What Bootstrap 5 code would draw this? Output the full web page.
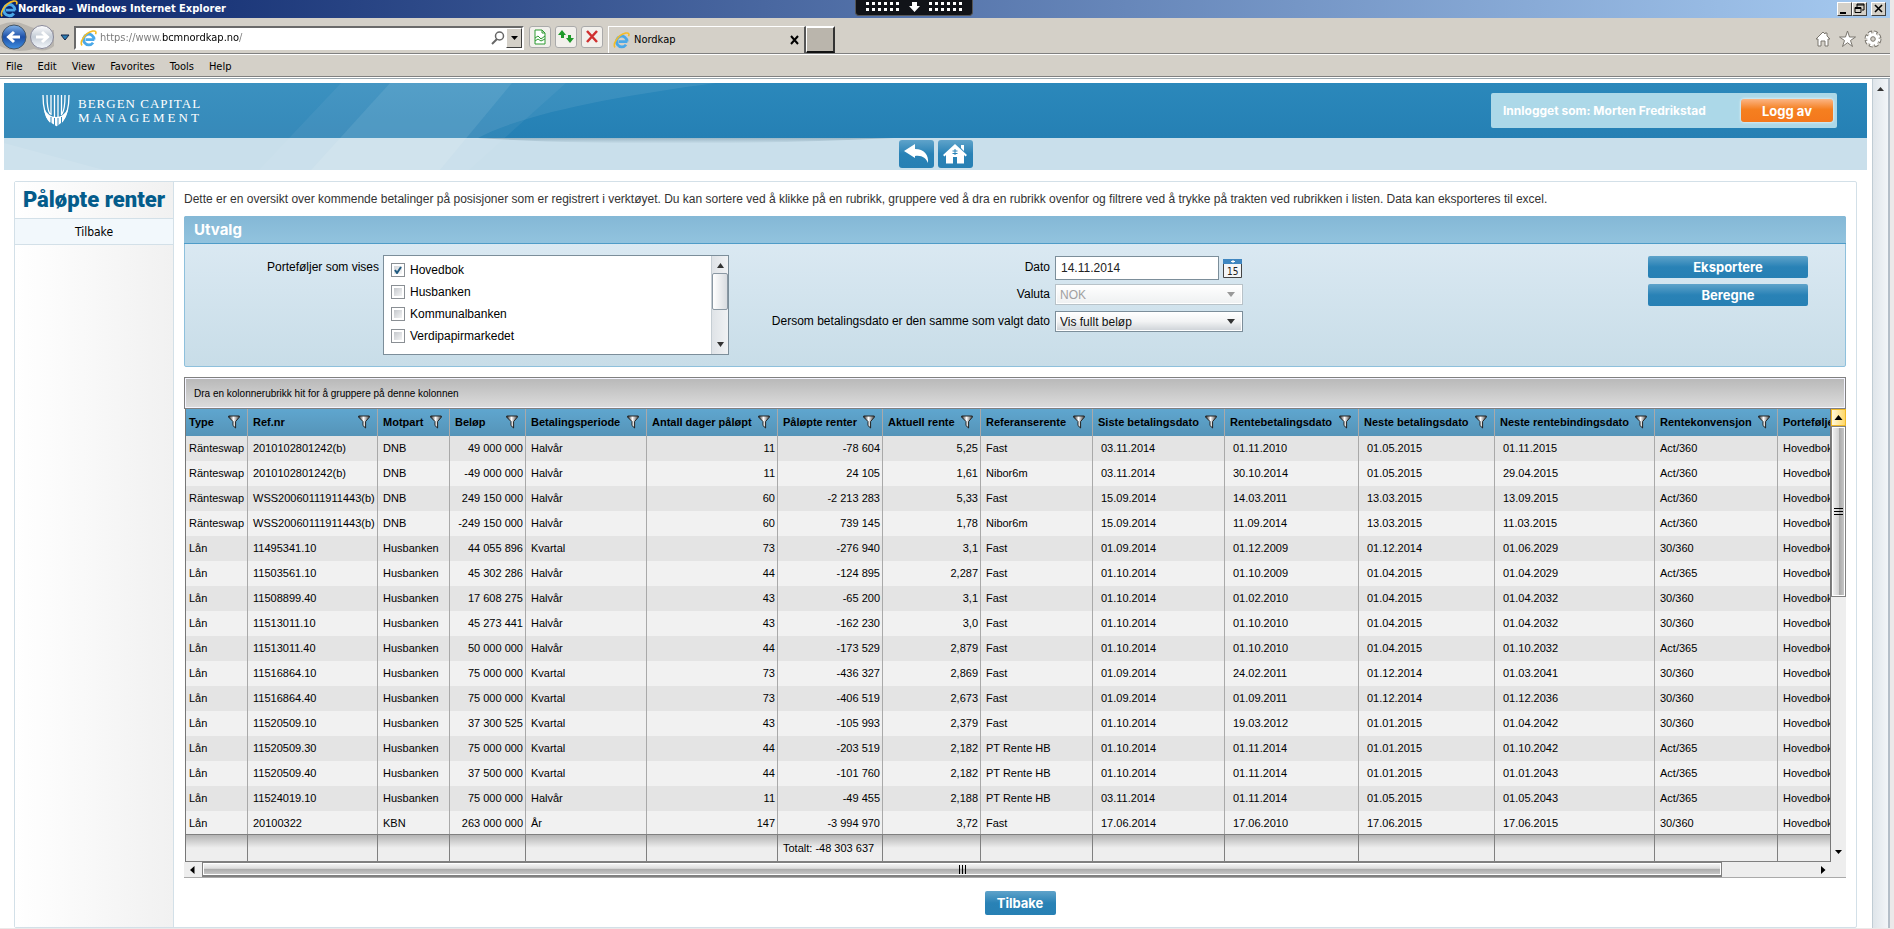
<!DOCTYPE html>
<html lang="no">
<head>
<meta charset="utf-8">
<meta name="viewport" content="width=device-width, initial-scale=1">
<title>Nordkap</title>
<link href="https://cdn.jsdelivr.net/npm/bootstrap@5.3.0/dist/css/bootstrap.min.css" rel="stylesheet">
<style>
:root{--ui:"DejaVu Sans Condensed","DejaVu Sans",sans-serif;--brand:"Inter","Open Sans",sans-serif;--line:#d3e0e8}
body{font:12px/16px "Liberation Sans",Arial,sans-serif;color:#000;background:#ebe9e9;min-height:100vh}
svg{display:block;flex:none}
button{font:inherit;border:0;padding:0}
.shell{margin-right:4px;background:#fff}
.titlebar{height:18px;background:linear-gradient(90deg,#0a246a,#a6caf0);color:#fff;font:bold 11px/18px var(--ui)}
.winbtn{width:15px;height:14px;background:#d4d0c8;border:1px solid;border-color:#fff #404040 #404040 #fff}
.dock{left:855px;top:0;width:118px;height:16px;background:#111318;border:1px solid #555;border-top:0;border-radius:0 0 4px 4px}
.chrome{background:#d4d0c8;font:11px/16px var(--ui)}
.addrrow{height:36px;border-bottom:1px solid #808080;padding-top:8px}
.navorbs{margin-top:-4px}
.menurow{height:23px;border-top:1px solid #fff;border-bottom:1px solid #808080;padding:2px 0 0 6px;gap:15px}
.menurow a{color:#000;text-decoration:none}
.addr{width:450px;height:24px;border:2px solid;border-color:#6a6a6a #fff #fff #6a6a6a;background:#fff}
.addr input{border:0;outline:0;padding:0;margin-left:3px;font:inherit;min-width:0;color:transparent;background:linear-gradient(90deg,#777 62px,#000 62px,#000 139px,#777 139px);-webkit-background-clip:text;background-clip:text}
.drop{width:16px;height:20px;background:#d4d0c8;border:1px solid;border-color:#fff #404040 #404040 #fff}
.tools{gap:4px;margin:0 5px}
.toolbtn{width:22px;height:22px;border:1px solid #aaa;border-radius:3px;background:#f2f0ec}
.tabbox{width:198px;height:27px;border:1px solid #fff;border-bottom:0;border-right:2px solid #555}
.newtab{width:29px;height:27px;background:#bab5ac;border:2px solid;border-color:#fff #333 #111 #fff;border-left-width:1px}
.viewport{border-top:1px solid #fff}
.viewport>.inner{border-top:1px solid #9aa8b0;min-height:850px}
.webpage{padding:4px 5px 0 4px;min-width:0}
.pagescroll{width:18px;border-left:1px solid #c0ccd4;border-right:2px solid #b4bec8;background:linear-gradient(90deg,#dfe5ea,#f2f5f8)}
.banner{height:55px;background:linear-gradient(#2b88bb,#2580b4)}
.bannerwrap{overflow:hidden}
.bannerwrap svg.deco{left:0;top:0}
.subbar{height:32px;background:#c9dfeb}
.brandrow{height:55px;padding:0 30px 0 38px}
.iconrow{padding-top:2px}
.logo{font:13px/14px "Liberation Serif",serif;color:#fff;letter-spacing:1px}
.logo .wide{letter-spacing:3px}
.login{background:#acd8e8;height:35px;width:346px;border-radius:2px;color:#fff;font:bold 12px/16px var(--brand)}
.logout{width:92px;height:23px;border-radius:3px;color:#fff;font:bold 13px/22px var(--brand);background:linear-gradient(#fbb584,#f57f20 45%,#f4781c);box-shadow:0 0 3px #fff}
.blue{border-radius:2px;color:#fff;font:bold 13px/22px var(--brand);background:linear-gradient(#5fa3ca,#2982b6 50%,#2780b4)}
.sq{width:35px;height:28px;border-radius:3px}
.frame{margin:11px 10px 0;border:1px solid var(--line);border-radius:2px}
.side{width:159px;border-right:1px solid var(--line);background:linear-gradient(90deg,#fff,#f1f1f1)}
.side h1{font:900 22px/36px Roboto,"Liberation Sans",sans-serif;color:#045c8b;margin:0;white-space:nowrap}
.side a{height:27px;border:1px solid var(--line);border-width:1px 0;background:#f2f8fc;color:#000;text-decoration:none;font:12px/26px var(--ui)}
.work{padding:9px 10px 12px;min-width:0}
.intro{color:#333;line-height:16px;margin-bottom:9px}
.panelbox{border:1px solid #8ec0dc;border-radius:2px;background:linear-gradient(#deebf4,#c8dde8)}
.panelbox h2{margin:-1px -1px 0;height:28px;padding-left:10px;font:bold 15px/28px var(--brand);color:#fff;background:linear-gradient(#84b8d6,#92c3de);border-bottom:1px solid #4f9cc8;border-radius:2px 2px 0 0}
.fgrid{display:grid;grid-template-columns:544fr 514fr 602fr;padding:11px 0}
.rowlabel{line-height:24px}
.listbox{width:346px;height:100px;background:#fff;border:1px solid #7c8e9a;padding:3px 0 0 7px}
.listbox label{height:22px;gap:5px}
.listbox input{appearance:none;width:14px;height:14px;margin:0;border:1px solid #8a8f94;background:linear-gradient(135deg,#b9bdc2,#fff);box-shadow:inset 0 0 0 2px #fff}
.listbox input:checked{background:url("data:image/svg+xml,%3Csvg xmlns='http://www.w3.org/2000/svg' viewBox='0 0 12 12'%3E%3Cpath d='M3 6l2 3 4-6' fill='none' stroke='%23205a80' stroke-width='2'/%3E%3C/svg%3E"),linear-gradient(135deg,#c9cdd2,#fff)}
.lscroll{right:0;top:0;bottom:0;width:17px;background:linear-gradient(90deg,#dfe3e7,#f0f2f4);border-left:1px solid #c5cdd3;padding:7px 0}
.lthumb{width:16px;height:37px;border:1px solid #8a98a3;border-radius:2px;background:linear-gradient(90deg,#fff,#d8dce0);margin-top:5px}
.fields{display:grid;grid-template-columns:1fr 188px;column-gap:5px;align-content:start;text-align:right}
.fields label{line-height:26px}
.fields label:first-child{line-height:24px}
.datebox{height:26px}
.pickbox{height:27px}
.fields input{width:164px;height:24px;border:1px solid #7c8e9a;padding:0 5px;font:inherit;color:#222}
.fields select{appearance:none;width:188px;height:21px;border:1px solid #7c8e9a;padding:0 4px;font:inherit;color:#111;border-radius:0;box-shadow:inset 0 0 0 1px #fff;background:url("data:image/svg+xml,%3Csvg xmlns='http://www.w3.org/2000/svg' width='8' height='5'%3E%3Cpath d='M0 0h8L4 5z' fill='%23333'/%3E%3C/svg%3E") no-repeat right 7px center,linear-gradient(#fff,#f2f3f4 50%,#ccd1d6)}
.fields select:disabled{color:#a0a0a0;border-color:#b8c2c8;opacity:1;background:url("data:image/svg+xml,%3Csvg xmlns='http://www.w3.org/2000/svg' width='8' height='5'%3E%3Cpath d='M0 0h8L4 5z' fill='%23999'/%3E%3C/svg%3E") no-repeat right 7px center,linear-gradient(#fff,#eef0f1)}
.acts{width:160px;margin-right:37px;gap:6px;padding-top:1px}
.groupzone{margin-top:10px;height:32px;border:1px solid #808080;background:linear-gradient(#b8b8b8,#dcdcdc);box-shadow:inset 0 0 0 1px #f4f4ff;padding-left:9px;font-size:10px;line-height:31px}
.gridclip{overflow:hidden;border-left:1px solid #777;border-right:1px solid #777;min-width:0;margin-left:1px}
.datagrid{table-layout:fixed;width:1712px;border-collapse:separate;border-spacing:0;font-size:11px;line-height:16px;white-space:nowrap}
.datagrid th,.datagrid td{padding:0 2px 0 5px;border-right:1px solid #a9a9a9;overflow:hidden}
.datagrid th:first-child,.datagrid td:first-child{padding-left:3px}
.datagrid th{height:27px;background:linear-gradient(#5fa6cf,#5594b8);padding-right:7px;padding-bottom:1px}
.datagrid tbody td{height:25px;padding-bottom:1px}
.datagrid tbody tr:nth-child(odd){background:#e4e4e4}
.datagrid tbody tr:nth-child(even){background:#f1f1f1}
.datagrid tbody tr:last-child td{height:23px;padding-bottom:0}
.datagrid td.dt{padding-left:8px}
.datagrid tfoot td{height:28px;background:linear-gradient(#b4b4b4,#eee 50%);border:1px solid #808080;border-left:0}
.vscroll{width:15px;background:#eee}
.vup{width:15px;height:17px;border:1px solid #f0b828;background:linear-gradient(90deg,#fff8dc,#ffd868)}
.vthumb{height:171px;border:1px solid #808080;box-shadow:inset 0 0 0 1px #fff;background:linear-gradient(90deg,#f4f4f4,#d4d4d4 50%,#a9a9a9 55%,#ccc)}
.hscroll{height:16px;background:#eee;border-bottom:1px solid #aaa;padding:0 20px 0 6px}
.hthumb{flex:1 1 0;height:15px;border:1px solid #808080;border-bottom-width:2px;box-shadow:inset 0 0 0 1px #fff;background:linear-gradient(#f8f8f8,#ddd 45%,#aaa 50%,#ccc);margin:0 99px 0 7px}
.backrow{padding:13px 0 0 10px}
.backbtn{height:24px;width:71px}
</style>
</head>
<body>
<svg width="0" height="0" class="position-absolute">
<defs>
<linearGradient id="fg"><stop offset="0" stop-color="#222"/><stop offset=".45" stop-color="#fff"/><stop offset="1" stop-color="#444"/></linearGradient>
<linearGradient id="orb" x2="0" y2="1"><stop offset="0" stop-color="#7fb2ea"/><stop offset=".5" stop-color="#1c4fa8"/><stop offset="1" stop-color="#3f8fe0"/></linearGradient>
<linearGradient id="orb2" x2="0" y2="1"><stop offset="0" stop-color="#fff"/><stop offset=".5" stop-color="#c4ccd6"/><stop offset="1" stop-color="#f4f8fc"/></linearGradient>
<symbol id="ie" viewBox="0 0 16 16"><path d="M13.500 9H5.200M13.300 9A5 5 0 1 0 12.300 12" fill="none" stroke="#4aa8e8" stroke-width="2.600"/><path d="M2 14.500C-.5 12 4 3 12 1c3-.6 3.500 1 2.600 3" fill="none" stroke="#f4bc28" stroke-width="1.500"/></symbol>
<symbol id="funnel" viewBox="0 0 12 14"><path d="M.7 1h10.600v1.200L7.600 6.500V13L5 10.600V6.500L.7 2.200z" fill="url(#fg)" stroke="#222" stroke-width="1"/></symbol>
</defs></svg>

<div class="shell">
<header class="titlebar d-flex align-items-center position-relative">
  <svg width="18" height="18"><use href="#ie"/></svg><span>Nordkap - Windows Internet Explorer</span>
  <div class="ms-auto d-flex me-1">
    <button class="winbtn" aria-label="Minimer"><svg width="13" height="12"><path d="M2 9h6v2H2z"/></svg></button>
    <button class="winbtn" aria-label="Gjenopprett"><svg width="13" height="12"><path d="M4 1h7v6H9M4 1v3M4 2h7M2 4.500h6v5H2zM2 5.500h6" fill="none" stroke="#000"/></svg></button>
    <button class="winbtn ms-1" aria-label="Lukk"><svg width="13" height="12"><path d="M3 2l7 7M10 2l-7 7" stroke="#000" stroke-width="1.600"/></svg></button>
  </div>
  <div class="dock position-absolute"><svg width="116" height="14"><path d="M10 3.500h34M10 9.500h34M73 3.500h34M73 9.500h34" stroke="#fff" stroke-width="3" stroke-dasharray="3 3"/><path d="M56 2h5v4h3l-5.500 6L53 6h3z" fill="#fff"/></svg></div>
</header>

<div class="chrome">
  <div class="addrrow d-flex">
    <svg class="navorbs" width="56" height="30" viewBox="0 0 56 30"><path d="M0 3Q14-3 26 3T54 8V24Q46 31 34 27Q14 32 0 24z" fill="#b9b5ae"/><circle cx="14" cy="15" r="12" fill="url(#orb)" stroke="#456"/><path d="M20 15H9M14 10l-5.500 5 5.500 5" fill="none" stroke="#fff" stroke-width="3"/><circle cx="42" cy="15" r="11.500" fill="url(#orb2)" stroke="#889"/><path d="M36 15h11M42 10l5.500 5-5.500 5" fill="none" stroke="#fff" stroke-width="3"/></svg>
    <svg class="mt-2 ms-1" width="10" height="7"><path d="M1 1h8L5 6z" fill="#2a7fb8" stroke="#124"/></svg>
    <div class="addr d-flex align-items-center ms-1 flex-shrink-0">
      <svg class="ms-1" width="17" height="17"><use href="#ie"/></svg>
      <input class="flex-grow-1" type="text" aria-label="Adresse" value="https://www.bcmnordkap.no/">
      <svg width="16" height="16"><circle cx="9.500" cy="6" r="4" fill="none" stroke="#666" stroke-width="1.500"/><path d="M7 9l-5 5" stroke="#666" stroke-width="2"/></svg>
      <button class="drop" aria-label="Vis adresser"><svg width="14" height="18"><path d="M4 7h7l-3.500 4z"/></svg></button>
    </div>
    <div class="tools d-flex">
    <button class="toolbtn" aria-label="Kompatibilitet"><svg width="20" height="20"><path d="M5 3h7l3 3v11H5zM12 3v3h3M5 11l3-2 3 3 4-3M5 14l3-2 3 2 4-2" fill="#fff" stroke="#2c9a30"/></svg></button>
    <button class="toolbtn" aria-label="Oppdater"><svg width="20" height="20"><path d="M6 3L2 8h3v3h3V8h2zM14 16l4-5h-3V8h-3v3h-2z" fill="#1f9a2a"/></svg></button>
    <button class="toolbtn" aria-label="Stopp"><svg width="20" height="20"><path d="M5 4l10 11M15 4L5 15" stroke="#d03030" stroke-width="2.500"/></svg></button>
    </div>
    <div class="tabbox d-flex align-items-center">
      <svg class="ms-1" width="17" height="17"><use href="#ie"/></svg><span class="ms-1">Nordkap</span>
      <button class="ms-auto me-1 bg-transparent" aria-label="Lukk fane"><svg width="10" height="10"><path d="M1 1l7 8M8 1L1 9" stroke="#000" stroke-width="2"/></svg></button>
    </div>
    <button class="newtab" aria-label="Ny fane"></button>
    <div class="ms-auto d-flex gap-2 me-2">
      <svg class="mt-1" width="16" height="18"><path d="M1 9l7-7 2 2V3h2v3l3 3h-2v7h-3v-5H6v5H3V9z" fill="#fff" stroke="#7a766e"/></svg>
      <svg class="mt-1" width="17" height="18"><path d="M8.500 1l2 6h6l-5 3.500 2 6-5-3.800-5 3.800 2-6L.5 7h6z" fill="#fff" stroke="#7a766e"/></svg>
      <svg class="mt-1" width="18" height="18"><circle cx="9" cy="9" r="6.500" fill="none" stroke="#7a766e" stroke-width="4" stroke-dasharray="3.500 1.600"/><circle cx="9" cy="9" r="6" fill="none" stroke="#fff" stroke-width="3" stroke-dasharray="2.500 2.200"/><circle cx="9" cy="9" r="4" fill="none" stroke="#fff" stroke-width="3.500"/><circle cx="9" cy="9" r="2.300" fill="none" stroke="#7a766e"/></svg>
    </div>
  </div>
  <nav class="menurow d-flex align-items-center"><a href="#">File</a><a href="#">Edit</a><a href="#">View</a><a href="#">Favorites</a><a href="#">Tools</a><a href="#">Help</a></nav>
</div>

<div class="viewport"><div class="inner d-flex">
<main class="webpage flex-grow-1">
  <div class="bannerwrap position-relative">
    <div class="banner"></div><div class="subbar"></div>
    <svg class="deco position-absolute" width="900" height="87" viewBox="0 0 900 87">
      <defs><linearGradient id="sh" x2="0" y2="1"><stop offset="0" stop-color="#7f9eae" stop-opacity=".6"/><stop offset="1" stop-color="#7f9eae" stop-opacity="0"/></linearGradient></defs>
      <path d="M0 0H712C620 12 520 30 474 55H0z" fill="#fff" opacity=".08"/>
      <path d="M0 60L100 87H0z" fill="#fff" opacity=".1"/>
      <path d="M337 0H386L307 87H255zM508 0H562L465 87H436z" fill="#fff" opacity=".05"/>
      <path d="M386 0H508L436 87H307z" fill="#fff" opacity=".13"/>
      <path d="M474 55H890Q650 66 474 55z" fill="url(#sh)"/>
    </svg>
    <div class="position-absolute top-0 start-0 w-100">
      <div class="brandrow d-flex align-items-center">
        <svg width="28" height="33" viewBox="0 0 28 33"><path d="M1 1C1 15 3 22 8 28M5 1C5 12 6 17 8 20M9 1v20M12.500 1v22M16 1v22M19.500 1v20M27 1C27 15 25 22 20 28M23 1C23 12 22 17 20 20" fill="none" stroke="#fff" stroke-width="1.300"/><path d="M2 14q4 9 12 9t12-9q-1 9-6 14t-6 4-6-4-6-14z" fill="#fff"/><path d="M9 23v7M12.500 24v8M16 24v8M19.500 23v7" stroke="#3a8dbd" stroke-width="1"/></svg>
        <div class="logo ms-2">BERGEN CAPITAL<br><span class="wide">MANAGEMENT</span></div>
        <div class="login ms-auto d-flex align-items-center"><span class="ps-2 ms-1">Innlogget som: Morten Fredrikstad</span><button class="logout ms-auto me-1">Logg av</button></div>
      </div>
      <div class="iconrow d-flex justify-content-center gap-1">
        <button class="blue sq" aria-label="Tilbake"><svg width="35" height="28"><path d="M5 11L16 4v5c9 0 14 6 13 14-2-5-6-8-13-7v2z" fill="#fff"/></svg></button>
        <button class="blue sq" aria-label="Hjem"><svg width="35" height="28"><path d="M17 4l12 11-1.500 1.500L26 15v8.500h-7V17h-4v6.500H8V15l-1.500 1.500L5 15zM23 5h3v6l-3-3z" fill="#fff"/><path d="M14.500 11h5M14.500 13.500h5M17 9v6" stroke="#2982b6"/></svg></button>
      </div>
    </div>
  </div>

  <div class="frame d-flex">
    <aside class="side flex-shrink-0 text-center"><h1>Påløpte renter</h1><a class="d-block" href="#">Tilbake</a></aside>
    <section class="work flex-grow-1">
      <p class="intro">Dette er en oversikt over kommende betalinger på posisjoner som er registrert i verktøyet. Du kan sortere ved å klikke på en rubrikk, gruppere ved å dra en rubrikk ovenfor og filtrere ved å trykke på trakten ved rubrikken i listen. Data kan eksporteres til excel.</p>
      <div class="panelbox">
        <h2>Utvalg</h2>
        <form class="fgrid">
          <div class="d-flex justify-content-end gap-1">
            <span class="rowlabel">Porteføljer som vises</span>
            <div class="listbox position-relative">
              <label class="d-flex align-items-center"><input type="checkbox" checked>Hovedbok</label>
              <label class="d-flex align-items-center"><input type="checkbox">Husbanken</label>
              <label class="d-flex align-items-center"><input type="checkbox">Kommunalbanken</label>
              <label class="d-flex align-items-center"><input type="checkbox">Verdipapirmarkedet</label>
              <div class="lscroll position-absolute d-flex flex-column align-items-center"><svg width="7" height="5"><path d="M0 5h7L3.500 0z" fill="#333"/></svg><div class="lthumb"></div><svg class="mt-auto" width="7" height="5"><path d="M0 0h7L3.500 5z" fill="#333"/></svg></div>
            </div>
          </div>
          <div class="fields">
            <label for="dato">Dato</label>
            <div class="datebox d-flex align-items-center gap-1"><input id="dato" type="text" value="14.11.2014"><svg width="19" height="19"><path d="M.5.5h18v18H.5z" fill="#f4f6f8" stroke="#444"/><path d="M0 0h19v5H0z" fill="#3f86c0"/><path d="M8 2.500h4M10 1v3" stroke="#fff"/><text x="4" y="16" font-size="10" font-family="DejaVu Sans Condensed" fill="#222">15</text></svg></div>
            <label for="valuta">Valuta</label>
            <div class="pickbox d-flex align-items-center"><select id="valuta" disabled><option>NOK</option></select></div>
            <label for="vis">Dersom betalingsdato er den samme som valgt dato</label>
            <div class="pickbox d-flex align-items-center"><select id="vis"><option>Vis fullt beløp</option></select></div>
          </div>
          <div class="d-flex justify-content-end"><div class="acts d-flex flex-column"><button type="button" class="blue">Eksportere</button><button type="button" class="blue">Beregne</button></div></div>
        </form>
      </div>

      <div class="groupzone">Dra en kolonnerubrikk hit for å gruppere på denne kolonnen</div>
      <div class="d-flex">
        <div class="gridclip flex-grow-1">
          <table class="datagrid"><colgroup id="cols"></colgroup><thead><tr id="heads"></tr></thead><tbody id="rows"></tbody><tfoot><tr id="sums"></tr></tfoot></table>
        </div>
        <div class="vscroll flex-shrink-0 d-flex flex-column align-items-center">
          <button class="vup" aria-label="Opp"><svg width="13" height="15"><path d="M2.500 10h8L6.500 5z"/></svg></button>
          <div class="vthumb w-100 d-flex align-items-center justify-content-center"><svg width="9" height="7"><path d="M0 .5h9M0 3.500h9M0 6.500h9" stroke="#000"/></svg></div>
          <svg class="mt-auto mb-1" width="7" height="10"><path d="M0 2h7L3.500 6z"/></svg>
        </div>
      </div>
      <div class="hscroll d-flex"><svg class="align-self-center" width="5" height="8"><path d="M4.500 0v8L0 4z"/></svg><div class="hthumb d-flex align-items-center justify-content-center"><svg width="7" height="9"><path d="M.5 0v9M3.500 0v9M6.500 0v9" stroke="#000"/></svg></div><svg class="align-self-center" width="5" height="8"><path d="M0 0v8l4.500-4z"/></svg></div>
      <div class="backrow d-flex justify-content-center"><button class="blue backbtn">Tilbake</button></div>
    </section>
  </div>
</main>
<div class="pagescroll flex-shrink-0 d-flex justify-content-center pt-1"><svg class="mt-1" width="8" height="5"><path d="M0 4h7L3.500 0z" fill="#333"/></svg></div>
</div></div>
</div>

<script>
// name, width, kind (n = number, d = date)
const cols=[["Type",62],["Ref.nr",130],["Motpart",72],["Beløp",76,"n"],["Betalingsperiode",121],["Antall dager påløpt",131,"n"],["Påløpte renter",105,"n"],["Aktuell rente",98,"n"],["Referanserente",112],["Siste betalingsdato",132,"d"],["Rentebetalingsdato",134,"d"],["Neste betalingsdato",136,"d"],["Neste rentebindingsdato",160,"d"],["Rentekonvensjon",123],["Portefølje",120]];
const data=`Ränteswap|2010102801242(b)|DNB|49 000 000|Halvår|11|-78 604|5,25|Fast|03.11.2014|01.11.2010|01.05.2015|01.11.2015|Act/360
Ränteswap|2010102801242(b)|DNB|-49 000 000|Halvår|11|24 105|1,61|Nibor6m|03.11.2014|30.10.2014|01.05.2015|29.04.2015|Act/360
Ränteswap|WSS20060111911443(b)|DNB|249 150 000|Halvår|60|-2 213 283|5,33|Fast|15.09.2014|14.03.2011|13.03.2015|13.09.2015|Act/360
Ränteswap|WSS20060111911443(b)|DNB|-249 150 000|Halvår|60|739 145|1,78|Nibor6m|15.09.2014|11.09.2014|13.03.2015|11.03.2015|Act/360
Lån|11495341.10|Husbanken|44 055 896|Kvartal|73|-276 940|3,1|Fast|01.09.2014|01.12.2009|01.12.2014|01.06.2029|30/360
Lån|11503561.10|Husbanken|45 302 286|Halvår|44|-124 895|2,287|Fast|01.10.2014|01.10.2009|01.04.2015|01.04.2029|Act/365
Lån|11508899.40|Husbanken|17 608 275|Halvår|43|-65 200|3,1|Fast|01.10.2014|01.02.2010|01.04.2015|01.04.2032|30/360
Lån|11513011.10|Husbanken|45 273 441|Halvår|43|-162 230|3,0|Fast|01.10.2014|01.10.2010|01.04.2015|01.04.2032|30/360
Lån|11513011.40|Husbanken|50 000 000|Halvår|44|-173 529|2,879|Fast|01.10.2014|01.10.2010|01.04.2015|01.10.2032|Act/365
Lån|11516864.10|Husbanken|75 000 000|Kvartal|73|-436 327|2,869|Fast|01.09.2014|24.02.2011|01.12.2014|01.03.2041|30/360
Lån|11516864.40|Husbanken|75 000 000|Kvartal|73|-406 519|2,673|Fast|01.09.2014|01.09.2011|01.12.2014|01.12.2036|30/360
Lån|11520509.10|Husbanken|37 300 525|Kvartal|43|-105 993|2,379|Fast|01.10.2014|19.03.2012|01.01.2015|01.04.2042|30/360
Lån|11520509.30|Husbanken|75 000 000|Kvartal|44|-203 519|2,182|PT Rente HB|01.10.2014|01.11.2014|01.01.2015|01.10.2042|Act/365
Lån|11520509.40|Husbanken|37 500 000|Kvartal|44|-101 760|2,182|PT Rente HB|01.10.2014|01.11.2014|01.01.2015|01.01.2043|Act/365
Lån|11524019.10|Husbanken|75 000 000|Halvår|11|-49 455|2,188|PT Rente HB|03.11.2014|01.11.2014|01.05.2015|01.05.2043|Act/365
Lån|20100322|KBN|263 000 000|År|147|-3 994 970|3,72|Fast|17.06.2014|17.06.2010|17.06.2015|17.06.2015|30/360`;
const $=id=>document.getElementById(id);
$("cols").innerHTML=cols.map(c=>`<col style="width:${c[1]}px">`).join("");
$("heads").innerHTML=cols.map(c=>`<th><div class="d-flex justify-content-between align-items-center">${c[0]}<svg width="12" height="14"><use href="#funnel"/></svg></div></th>`).join("");
$("rows").innerHTML=data.split("\n").map(r=>"<tr>"+(r+"|Hovedbok").split("|").map((v,i)=>`<td class="${cols[i][2]==="n"?"text-end":cols[i][2]==="d"?"dt":""}">${v}</td>`).join("")+"</tr>").join("");
$("sums").innerHTML=cols.map((c,i)=>`<td>${i===6?"Totalt: -48 303 637":""}</td>`).join("");
</script>
<script src="https://cdn.jsdelivr.net/npm/bootstrap@5.3.0/dist/js/bootstrap.bundle.min.js"></script>
</body>
</html>
